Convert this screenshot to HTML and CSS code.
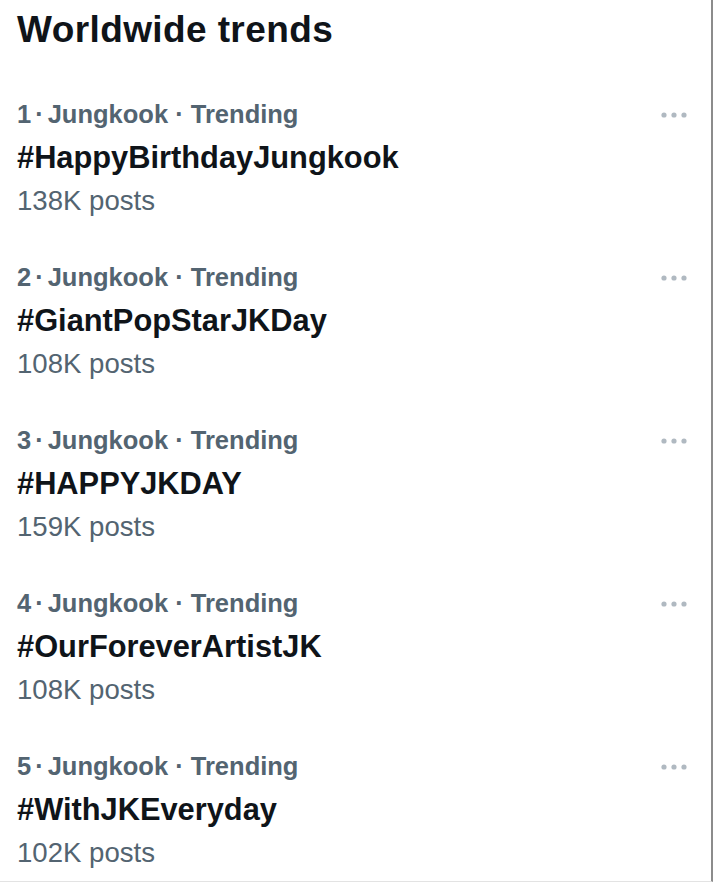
FILE: index.html
```html
<!DOCTYPE html>
<html lang="en">

<head>
    <meta charset="UTF-8">
    <meta name="viewport" content="width=device-width, initial-scale=1.0">
    <title>Worldwide trends</title>
    <link rel="stylesheet" href="styles.css">
</head>

<body>
    <div class="panel">
        <h2 class="panel-title">Worldwide trends</h2>

        <div class="trend">
            <div class="trend-top">
                <span class="trend-meta">1<span class="sep">·</span>Jungkook · Trending</span>
                <svg class="more" width="26" height="6" viewBox="0 0 26 6"><circle cx="3" cy="3" r="2.6"/><circle cx="13" cy="3" r="2.6"/><circle cx="23" cy="3" r="2.6"/></svg>
            </div>
            <div class="trend-name">#HappyBirthdayJungkook</div>
            <div class="trend-count">138K posts</div>
        </div>

        <div class="trend">
            <div class="trend-top">
                <span class="trend-meta">2<span class="sep">·</span>Jungkook · Trending</span>
                <svg class="more" width="26" height="6" viewBox="0 0 26 6"><circle cx="3" cy="3" r="2.6"/><circle cx="13" cy="3" r="2.6"/><circle cx="23" cy="3" r="2.6"/></svg>
            </div>
            <div class="trend-name">#GiantPopStarJKDay</div>
            <div class="trend-count">108K posts</div>
        </div>

        <div class="trend">
            <div class="trend-top">
                <span class="trend-meta">3<span class="sep">·</span>Jungkook · Trending</span>
                <svg class="more" width="26" height="6" viewBox="0 0 26 6"><circle cx="3" cy="3" r="2.6"/><circle cx="13" cy="3" r="2.6"/><circle cx="23" cy="3" r="2.6"/></svg>
            </div>
            <div class="trend-name">#HAPPYJKDAY</div>
            <div class="trend-count">159K posts</div>
        </div>

        <div class="trend">
            <div class="trend-top">
                <span class="trend-meta">4<span class="sep">·</span>Jungkook · Trending</span>
                <svg class="more" width="26" height="6" viewBox="0 0 26 6"><circle cx="3" cy="3" r="2.6"/><circle cx="13" cy="3" r="2.6"/><circle cx="23" cy="3" r="2.6"/></svg>
            </div>
            <div class="trend-name">#OurForeverArtistJK</div>
            <div class="trend-count">108K posts</div>
        </div>

        <div class="trend">
            <div class="trend-top">
                <span class="trend-meta">5<span class="sep">·</span>Jungkook · Trending</span>
                <svg class="more" width="26" height="6" viewBox="0 0 26 6"><circle cx="3" cy="3" r="2.6"/><circle cx="13" cy="3" r="2.6"/><circle cx="23" cy="3" r="2.6"/></svg>
            </div>
            <div class="trend-name">#WithJKEveryday</div>
            <div class="trend-count">102K posts</div>
        </div>
    </div>
</body>

</html>
```

FILE: styles.css
```css
body {
    font-family: 'Liberation Sans', Arial, sans-serif;
    background-color: #ffffff;
    margin: 0;
    color: #0f1419;
}

.panel {
    width: 713px;
    height: 882px;
    box-sizing: border-box;
    border-right: 2px solid #8c8c8c;
    border-bottom: 1px solid #e3e3e3;
    padding-top: 8px;
    overflow: hidden;
}

.panel-title {
    margin: 0 0 24px;
    padding-left: 17px;
    font-size: 37px;
    line-height: 44px;
    font-weight: bold;
    letter-spacing: 0.4px;
}

.trend {
    padding: 17px 24px 17px 17px;
}

.trend-top {
    display: flex;
    justify-content: space-between;
    align-items: center;
    height: 43px;
}

.trend-meta {
    font-size: 25.5px;
    line-height: 43px;
    font-weight: bold;
    color: #536471;
}

.sep {
    margin: 0 4px;
}

.more {
    fill: #b0b9c1;
}

.trend-name {
    font-size: 30.8px;
    line-height: 43px;
    font-weight: bold;
}

.trend-count {
    font-size: 27.6px;
    line-height: 43px;
    color: #536471;
}
```
